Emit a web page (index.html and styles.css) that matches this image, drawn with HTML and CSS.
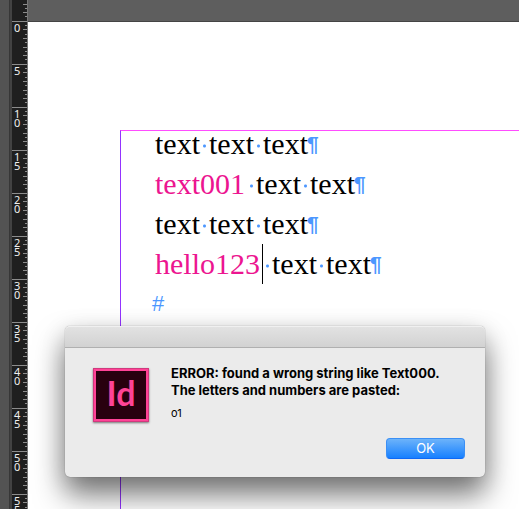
FILE: index.html
```html
<!DOCTYPE html>
<html lang="en">
<head>
<meta charset="utf-8">
<title>Document</title>
<link rel="stylesheet" href="styles.css">
</head>
<body>
<svg class="defs" aria-hidden="true">
  <symbol id="ticks" viewBox="0 0 15 43">
    <path class="tick-major" d="M0 .5H15"/>
    <path class="tick" d="M13 4.5H15M11 8.5H15M13 13.5H15M11 17.5H15M13 21.5H15M11 26.5H15M13 30.5H15M11 34.5H15M13 38.5H15"/>
  </symbol>
</svg>
<div class="app">
  <div class="edge"></div>
  <div class="ruler">
    <div class="mark lead"><svg class="ticks"><use href="#ticks"/></svg></div>
    <div class="mark"><svg class="ticks"><use href="#ticks"/></svg><span>0</span></div>
    <div class="mark"><svg class="ticks"><use href="#ticks"/></svg><span>5</span></div>
    <div class="mark"><svg class="ticks"><use href="#ticks"/></svg><span>10</span></div>
    <div class="mark"><svg class="ticks"><use href="#ticks"/></svg><span>15</span></div>
    <div class="mark"><svg class="ticks"><use href="#ticks"/></svg><span>20</span></div>
    <div class="mark"><svg class="ticks"><use href="#ticks"/></svg><span>25</span></div>
    <div class="mark"><svg class="ticks"><use href="#ticks"/></svg><span>30</span></div>
    <div class="mark"><svg class="ticks"><use href="#ticks"/></svg><span>35</span></div>
    <div class="mark"><svg class="ticks"><use href="#ticks"/></svg><span>40</span></div>
    <div class="mark"><svg class="ticks"><use href="#ticks"/></svg><span>45</span></div>
    <div class="mark"><svg class="ticks"><use href="#ticks"/></svg><span>50</span></div>
    <div class="mark"><svg class="ticks"><use href="#ticks"/></svg><span>55</span></div>
  </div>
  <main class="canvas">
    <div class="pasteboard"></div>
    <div class="page">
      <div class="frame">
        <p>text<i class="space"></i>text<i class="space"></i>text<span class="pilcrow">¶</span></p>
        <p><span class="match">text001</span><i class="space"></i>text<i class="space"></i>text<span class="pilcrow">¶</span></p>
        <p>text<i class="space"></i>text<i class="space"></i>text<span class="pilcrow">¶</span></p>
        <p><span class="match">hello123</span><i class="caret"></i><i class="space"></i>text<i class="space"></i>text<span class="pilcrow">¶</span></p>
        <p class="end">#</p>
      </div>
    </div>
  </main>
</div>
<div class="dialog" role="alertdialog" aria-labelledby="message" aria-describedby="detail">
  <div class="titlebar"></div>
  <div class="content">
    <div class="logo">Id</div>
    <div class="copy">
      <h1 id="message">ERROR: found a wrong string like Text000.<br>The letters and numbers are pasted:</h1>
      <p id="detail">o1</p>
    </div>
  </div>
  <div class="actions"><button type="button">OK</button></div>
</div>
</body>
</html>
```
FILE: styles.css
```css
* { box-sizing: border-box; }
body {
  margin: 0;
  position: relative;
  height: 100vh;
  overflow: hidden;
  background: #fff;
}
p, h1 { margin: 0; }
.defs { position: absolute; width: 0; height: 0; }
.app { display: flex; height: 100%; }
.edge {
  flex: 0 0 12px;
  background: linear-gradient(to right, #535353 9px, #373737 9px, #373737 10px, #424242 10px);
}
.ruler {
  flex: 0 0 16px;
  overflow: hidden;
  background: #1f1f1f;
  border-right: 1px solid #777;
}
.mark {
  height: 43px;
  display: grid;
}
.mark > * { grid-area: 1 / 1; }
.mark.lead {
  height: 21px;
  align-items: end;
  overflow: hidden;
  align-content: end;
}
.ticks { display: block; width: 15px; height: 43px; }
.tick-major { stroke: #8c8c8c; }
.tick { stroke: #8c8c8c; }
.mark span {
  width: 7px;
  margin: 2px 0 0 2px;
  font: 11px/9px "Noto Sans", sans-serif;
  color: #f0f0f0;
  word-break: break-all;
}
.canvas {
  flex: 1;
  min-width: 0;
  display: flex;
  flex-direction: column;
}
.pasteboard {
  flex: 0 0 22px;
  background: #5e5e5e;
  border-bottom: 1px solid #444;
}
.page {
  flex: 1;
  display: flex;
  padding: 108px 0 0 92px;
}
.frame {
  flex: 1;
  padding-left: 34px;
  border-left: 1px solid #9333ff;
  border-top: 1px solid #ff4dff;
  font: 30px/40px "Liberation Serif", serif;
  color: #000;
  white-space: nowrap;
}
.frame p { display: flex; align-items: center; height: 40px; margin-top: -7px; margin-bottom: 7px; }
.match { margin-right: 2px; color: #ec1590; }
.space {
  width: 9px;
  height: 4px;
  margin-top: 4px;
  background: radial-gradient(circle, #4c97ff 1px, transparent 2px);
}
.pilcrow {
  margin-left: -1px;
  font-family: "Liberation Sans", sans-serif;
  font-size: 21px;
  font-weight: 700;
  color: #4c97ff;
}
.caret { width: 1px; height: 40px; background: #000; }
.frame .end {
  margin-left: -3px;
  font-family: "Liberation Sans", sans-serif;
  font-size: 22px;
  color: #4c97ff;
}
.dialog {
  position: absolute;
  top: 326px;
  left: 65px;
  right: 34px;
  border-radius: 5px;
  background: #ebebeb;
  box-shadow: 0 0 1px rgba(0, 0, 0, .5), 0 18px 30px rgba(0, 0, 0, .5), 0 6px 24px rgba(0, 0, 0, .15);
  font-family: Inter, sans-serif;
  color: #000;
}
.titlebar {
  height: 22px;
  border-radius: 5px 5px 0 0;
  border-top: 1px solid #f0f0f0;
  border-bottom: 1px solid #b0b0b0;
  background: linear-gradient(#e2e2e2, #d2d2d2);
}
.content { display: flex; gap: 22px; padding: 20px 20px 0 28px; }
.logo {
  flex: 0 0 56px;
  height: 54px;
  border: 3px solid #ff4397;
  outline: 1px solid #d03a7e;
  outline-offset: -1px;
  background: #28000f;
  box-shadow: 0 1px 2px rgba(0, 0, 0, .5);
  font: 700 34px/44px Lato, sans-serif;
  color: #ff4397;
  text-align: center;
}
h1 { margin-top: -3px; font-size: 13px; line-height: 17px; font-weight: 700; white-space: nowrap; }
.copy p { margin-top: 7px; font-size: 11px; line-height: 14px; }
.actions {
  display: flex;
  justify-content: flex-end;
  padding: 16px 20px 18px;
}
button {
  width: 79px;
  height: 21px;
  padding: 0;
  border: 1px solid #3b8ff5;
  border-bottom-color: #0f68f5;
  border-radius: 4px;
  background: linear-gradient(#6cb3fa, #1780ff);
  font: 13px/19px Inter, sans-serif;
  color: #fff;
}
```
